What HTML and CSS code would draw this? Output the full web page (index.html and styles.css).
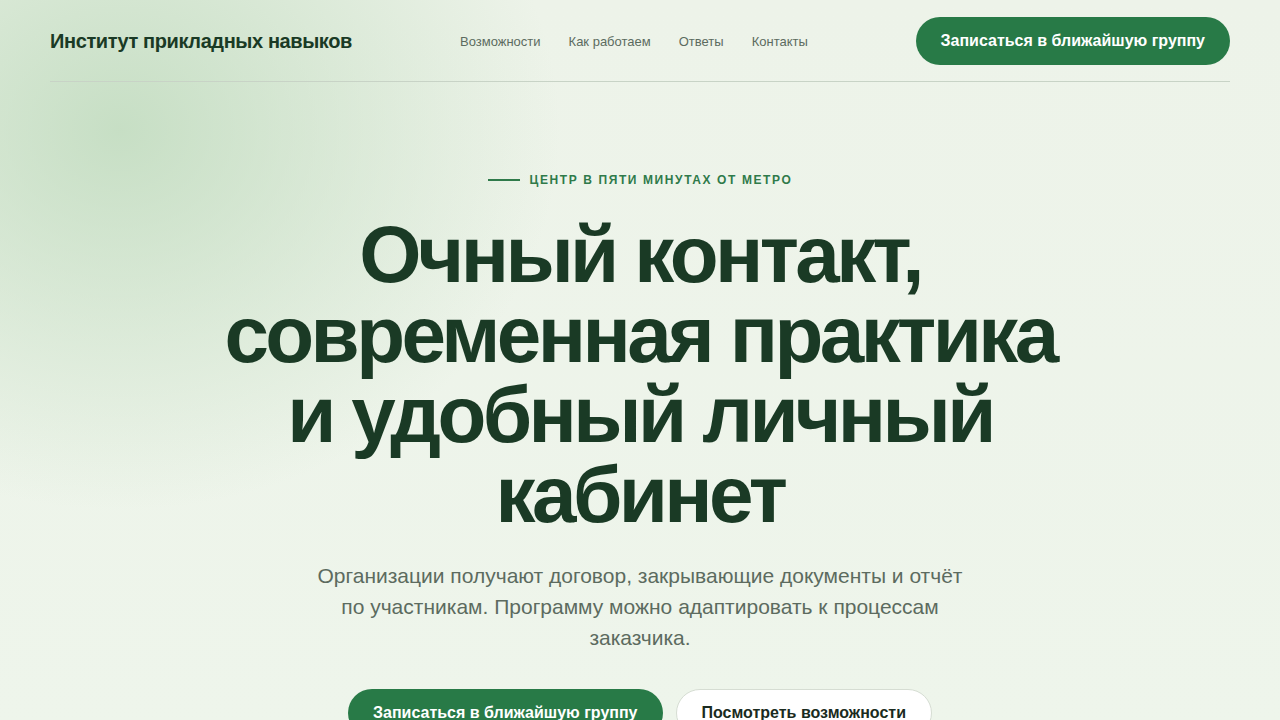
FILE: index.html
```html
<!DOCTYPE html>
<html lang="ru">
<head>
<meta charset="utf-8">
<title>Институт прикладных навыков</title>
<link rel="stylesheet" href="styles.css">
</head>
<body>
<div class="page">
  <header class="header">
    <div class="logo">Институт прикладных навыков</div>
    <nav class="nav">
      <a href="#">Возможности</a>
      <a href="#">Как работаем</a>
      <a href="#">Ответы</a>
      <a href="#">Контакты</a>
    </nav>
    <a class="btn btn-primary btn-header" href="#">Записаться в ближайшую группу</a>
  </header>
  <main class="hero">
    <div class="eyebrow"><span class="eyebrow-line"></span>ЦЕНТР В ПЯТИ МИНУТАХ ОТ МЕТРО</div>
    <h1 class="title">Очный контакт, современная практика и удобный личный кабинет</h1>
    <p class="lead">Организации получают договор, закрывающие документы и отчёт по участникам. Программу можно адаптировать к процессам заказчика.</p>
    <div class="actions">
      <a class="btn btn-primary btn-big" href="#">Записаться в ближайшую группу</a>
      <a class="btn btn-secondary btn-big" href="#">Посмотреть возможности</a>
    </div>
  </main>
</div>
</body>
</html>
```
FILE: styles.css
```css
* { box-sizing: border-box; }
html, body { margin: 0; padding: 0; }
body {
  font-family: "Liberation Sans", Arial, sans-serif;
  color: #1a3a25;
  background-color: #eef4ea;
  background-image:
    radial-gradient(ellipse 440px 380px at 120px 130px, rgba(192, 219, 190, 0.85), rgba(192, 219, 190, 0) 100%),
    linear-gradient(180deg, #edf3e9 0%, #eef5eb 100%);
  min-height: 720px;
  overflow: hidden;
}
.page {
  width: 1180px;
  margin: 0 auto;
}
.header {
  display: flex;
  align-items: center;
  height: 82px;
  padding-top: 1px;
  border-bottom: 1px solid #c8d3c6;
}
.logo {
  font-size: 20px;
  font-weight: 700;
  color: #1a3a25;
  letter-spacing: -0.4px;
  width: 410px;
}
.nav {
  display: flex;
  gap: 28px;
  flex: 1;
}
.nav a {
  font-size: 13px;
  color: #5c6b5f;
  text-decoration: none;
}
.btn {
  display: inline-flex;
  align-items: center;
  justify-content: center;
  border-radius: 999px;
  font-weight: 700;
  font-size: 16px;
  text-decoration: none;
  white-space: nowrap;
}
.btn-primary {
  background: #287a47;
  color: #ffffff;
}
.btn-header {
  height: 48px;
  padding: 0 25px;
}
.hero {
  display: flex;
  flex-direction: column;
  align-items: center;
  padding-top: 90px;
  text-align: center;
}
.eyebrow {
  display: flex;
  align-items: center;
  gap: 10px;
  font-size: 12px;
  line-height: 16px;
  font-weight: 700;
  letter-spacing: 1.6px;
  color: #2f7a4a;
}
.eyebrow-line {
  display: inline-block;
  width: 32px;
  height: 2px;
  background: #2f7a4a;
}
.title {
  margin: 27px 0 0;
  max-width: 860px;
  font-size: 80px;
  line-height: 80px;
  font-weight: 700;
  letter-spacing: -3.6px;
  color: #1a3a25;
}
.lead {
  margin: 25px 0 0;
  max-width: 660px;
  font-size: 21px;
  line-height: 31px;
  color: #5c6b5f;
}
.actions {
  display: flex;
  gap: 13px;
  margin-top: 36px;
}
.btn-big {
  height: 48px;
  padding: 0 25px;
}
.btn-secondary {
  background: #ffffff;
  color: #1a2b20;
  border: 1px solid #d6ddd3;
}
```
